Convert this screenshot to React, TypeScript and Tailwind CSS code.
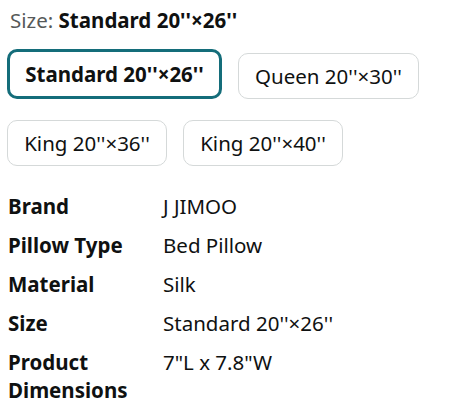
import React from 'react';

type Spec = { label: string; value: string };

const specs: Spec[] = [
  { label: 'Brand', value: 'J JIMOO' },
  { label: 'Pillow Type', value: 'Bed Pillow' },
  { label: 'Material', value: 'Silk' },
  { label: 'Size', value: "Standard 20''×26''" },
  { label: 'Product Dimensions', value: '7"L x 7.8"W' },
];

const App: React.FC = () => {
  return (
    <div
      className="w-[468px] h-[407px] overflow-hidden bg-white text-[#0f1111] text-[20.5px] leading-[28px]"
      style={{ fontFamily: '"Noto Sans", Arial, sans-serif' }}
    >
      {/* Taille choisie */}
      <div className="pt-[6px] pl-[10px]">
        <span className="text-[#565959]">Size: </span>
        <span className="font-bold">Standard 20''×26''</span>
      </div>

      {/* Options */}
      <div className="mt-[15px] pl-[7px] flex items-end gap-4">
        <button className="w-[215px] h-[50px] flex items-center justify-center rounded-[10px] border-[3px] border-[#146d7a] font-bold">
          Standard 20''×26''
        </button>
        <button className="w-[181px] h-[46px] flex items-center justify-center rounded-[10px] border border-[#d5d9d9]">
          Queen 20''×30''
        </button>
      </div>
      <div className="mt-[21px] pl-[7px] flex items-end gap-4">
        <button className="w-[160px] h-[46px] flex items-center justify-center rounded-[10px] border border-[#d5d9d9]">
          King 20''×36''
        </button>
        <button className="w-[160px] h-[46px] flex items-center justify-center rounded-[10px] border border-[#d5d9d9]">
          King 20''×40''
        </button>
      </div>

      {/* Détails */}
      <div className="mt-[20px] pl-[8px]">
        {specs.map((s) => (
          <div key={s.label} className="grid grid-cols-[155px_1fr] py-[5.5px]">
            <div className="font-bold pr-4">{s.label}</div>
            <div>{s.value}</div>
          </div>
        ))}
      </div>
    </div>
  );
};

export default App;
